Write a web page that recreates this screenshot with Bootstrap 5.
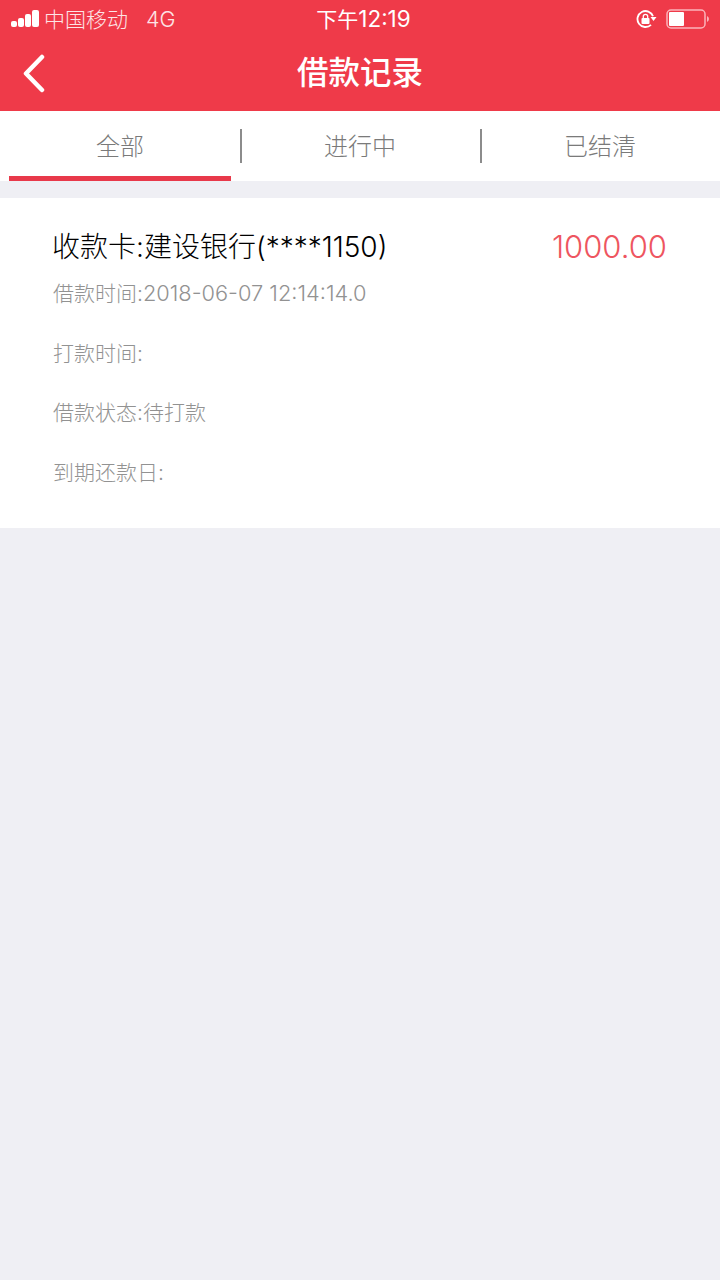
<!DOCTYPE html>
<html lang="zh">
<head>
<meta charset="utf-8">
<title>借款记录</title>
<link href="https://cdn.jsdelivr.net/npm/bootstrap@5.3.0/dist/css/bootstrap.min.css" rel="stylesheet">
<style>
html,body{height:100%}
body{background:#efeff4;font-family:Inter,"Noto Sans CJK SC",sans-serif;width:720px;min-height:1280px}
.app-head{background:#ef3a49;height:111px;color:#fff}
.status-row{height:38px;padding:0 10px}
.carrier{font-size:21px;font-weight:300;line-height:38px;color:#fde4e6;margin-left:1px}
.carrier-g{margin-left:18px;font-size:21.500px}
.clock{font-size:21px;line-height:38px;left:0;right:0;top:0;text-align:center;font-weight:400;padding-left:7px}
.clock-num{font-size:22.500px}
.title-row{height:73px}
.page-title{font-size:31.500px;line-height:70px;font-weight:500;margin:0}
.back-btn{left:22px;top:16px;line-height:0}
.tab-strip{background:#fff;height:70px}
.tab-cell{height:70px;font-size:24px;color:#7a7a7a;font-weight:300;padding-top:2px}
.tab-cell.has-rule::after{content:"";position:absolute;right:-2px;top:18px;height:34px;width:2px;background:#8c8c8c}
.tab-bar{position:absolute;left:9px;right:9px;bottom:0;height:5px;background:#e8394a}
.loan-panel{background:#fff;margin-top:17px;height:330px;padding:28px 53px 0 52px}
.loan-title{font-size:28px;line-height:42px;color:#000;font-weight:300}
.loan-amt{font-size:31px;line-height:42px;color:#ee5560;font-weight:300}
.loan-line{font-size:21px;line-height:30px;color:#929292;margin-top:29.500px;margin-left:1px;font-weight:300}
.loan-line.first{margin-top:10px}
.loan-stamp{font-size:21.800px}
</style>
</head>
<body>
<header class="app-head">
  <div class="status-row d-flex justify-content-between align-items-center position-relative">
    <div class="d-flex align-items-center gap-1">
      <svg width="29" height="18" viewBox="0 0 29 18" fill="#fff"><rect x="1" y="11" width="6" height="6" rx="2"/><rect x="8" y="8" width="6" height="9" rx="2"/><rect x="15" y="4" width="6" height="13" rx="2"/><rect x="22" y="0" width="7" height="17" rx="2"/></svg>
      <span class="carrier">中国移动<span class="carrier-g">4G</span></span>
    </div>
    <div class="clock position-absolute">下午<span class="clock-num">12:19</span></div>
    <div class="d-flex align-items-center gap-2">
      <svg width="22" height="20" viewBox="0 0 22 20" fill="none"><path d="M15 15.800A8 8 0 1 1 17 7.300" stroke="#fff" stroke-width="1.800"/><path d="M14.500 8h6l-3 4z" fill="#fff"/><rect x="5.500" y="9" width="8" height="6" rx="1" fill="#fff"/><path d="M7.300 9.500V7.500a2.200 2.200 0 0 1 4.400 0v2" stroke="#fff" stroke-width="1.300"/></svg>
      <svg width="44" height="20" viewBox="0 0 44 20"><rect x="1" y="1" width="38" height="18" rx="4" fill="none" stroke="#fbb4ba" stroke-width="1.500"/><rect x="3" y="3" width="15" height="14" rx="1" fill="#fff"/><path d="M41 7q2 1 2 3t-2 3z" fill="#fbb4ba"/></svg>
    </div>
  </div>
  <div class="title-row position-relative text-center">
    <svg class="back-btn position-absolute" width="24" height="40" viewBox="0 0 24 40" fill="none"><path d="M20 3 4 19.500 20 36" stroke="#fff" stroke-width="4.500" stroke-linecap="round" stroke-linejoin="round"/></svg>
    <h1 class="page-title">借款记录</h1>
  </div>
</header>
<nav class="tab-strip row g-0">
  <div class="col-4 tab-cell has-rule position-relative d-flex align-items-center justify-content-center">全部<span class="tab-bar"></span></div>
  <div class="col-4 tab-cell has-rule position-relative d-flex align-items-center justify-content-center">进行中</div>
  <div class="col-4 tab-cell d-flex align-items-center justify-content-center">已结清</div>
</nav>
<section class="loan-panel">
  <div class="d-flex justify-content-between">
    <div class="loan-title">收款卡:建设银行(****1150)</div>
    <div class="loan-amt">1000.00</div>
  </div>
  <div class="loan-line first">借款时间:<span class="loan-stamp">2018-06-07 12:14:14.0</span></div>
  <div class="loan-line">打款时间:</div>
  <div class="loan-line">借款状态:待打款</div>
  <div class="loan-line">到期还款日:</div>
</section>
<script src="https://cdn.jsdelivr.net/npm/bootstrap@5.3.0/dist/js/bootstrap.bundle.min.js"></script>
</body>
</html>
